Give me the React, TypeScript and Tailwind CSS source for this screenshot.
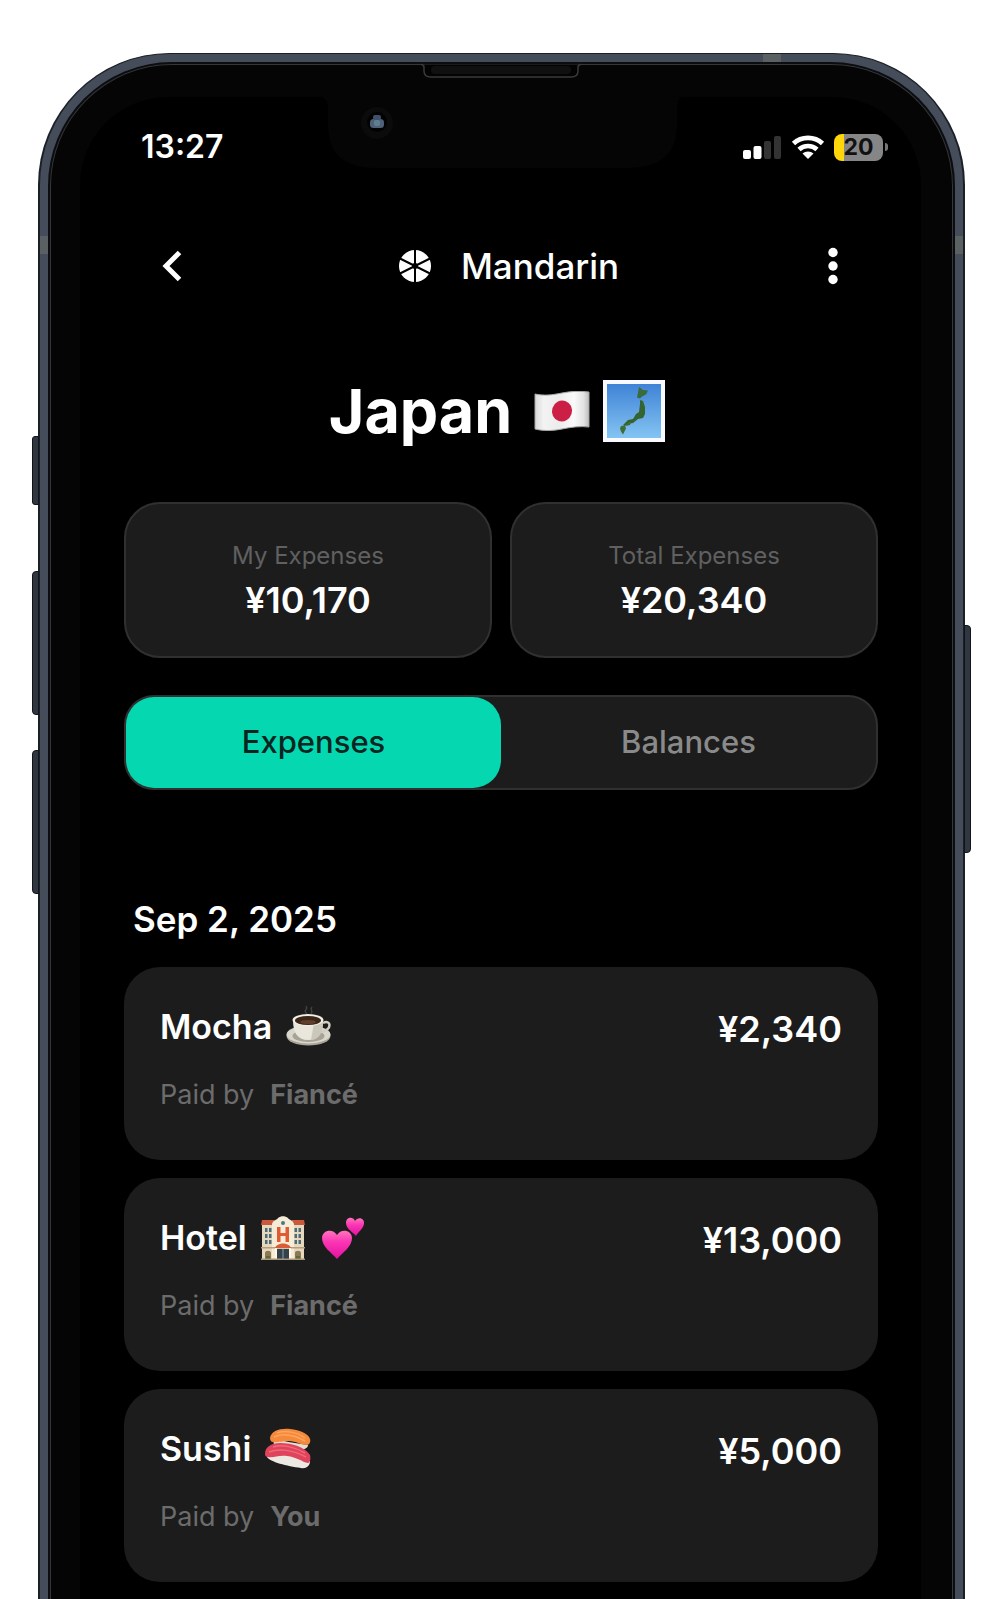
import { useState, type ReactNode } from "react";

function FlagEmoji() {
  return (
    <svg role="img" aria-label="Flag of Japan" viewBox="0 0 56 40" className="h-[40px] w-[56px]">
      <defs>
        <linearGradient id="cloth" x1="0" x2="1" y1="0" y2="0">
          <stop offset="0" stopColor="#d9d9d9" />
          <stop offset=".16" stopColor="#f3f3f3" />
          <stop offset=".45" stopColor="#ececec" />
          <stop offset=".72" stopColor="#fafafa" />
          <stop offset=".9" stopColor="#e3e3e3" />
          <stop offset="1" stopColor="#bdbdbd" />
        </linearGradient>
      </defs>
      <path d="M1 3C10 5 18 4 28 2C38 0 46 0 55 1V36C46 35 38 36 28 38C18 40 9 40 1 38Z" fill="url(#cloth)" stroke="#a6a6a6" strokeWidth="1" />
      <ellipse cx="28" cy="20" rx="10" ry="10.5" transform="rotate(18 28 20)" fill="#cb1f45" />
    </svg>
  );
}

function MapEmoji() {
  return (
    <svg role="img" aria-label="Map of Japan" viewBox="0 0 62 62" className="h-[62px] w-[62px]">
      <defs>
        <linearGradient id="sea" x1="0" x2="0" y1="0" y2="1">
          <stop offset="0" stopColor="#3f83d6" />
          <stop offset="1" stopColor="#84c4f3" />
        </linearGradient>
      </defs>
      <rect width="62" height="62" fill="#f8faff" />
      <rect x="4" y="4" width="54" height="54" fill="url(#sea)" />
      <path d="M36 7l4 3 5 .5-2 4-4 2-2 2-3-1 1-5z" fill="#3a6b38" />
      <path d="M37 20l3 1 2 6v7l-2 4-5 1-5 4-5 1-3 2-2-1 5-5 5-1 3-5 3-2 1-8z" fill="#35652f" />
      <path d="M24 43l4-1-1 3-4 1zM18 46l4-.5 1 3-2 4-1 2-2-3-1-3z" fill="#3e7034" />
    </svg>
  );
}

function CoffeeEmoji() {
  return (
    <svg role="img" aria-label="Coffee" viewBox="0 0 46 44" className="h-[44px] w-[46px]">
      <path d="M21 9c-5-4 2-4-1-8M25 9c3-4-2-4 1-7" fill="none" stroke="#77777766" strokeWidth="1.5" />
      <ellipse cx="22.500" cy="31" rx="22" ry="9.500" fill="#a9a599" />
      <ellipse cx="22.500" cy="29.500" rx="22" ry="9" fill="#d9d6cb" />
      <ellipse cx="22.500" cy="31" rx="16" ry="6" fill="#a8a397" />
      <path d="M37 18c8-4 10 6-2 9" fill="none" stroke="#d2cec3" strokeWidth="2.500" />
      <path d="M7 15c0 12 4 20 15 20s15-8 15-20z" fill="#e9e6dc" />
      <path d="M28 18h9c0 9-4 17-12 17z" fill="#cbc7bb" />
      <ellipse cx="22" cy="15" rx="15.500" ry="6" fill="#f0eee5" />
      <ellipse cx="22" cy="15.500" rx="13" ry="4.500" fill="#3c2519" />
      <ellipse cx="22" cy="17" rx="8" ry="2" fill="#603f2c" />
    </svg>
  );
}

function HotelEmoji() {
  return (
    <svg role="img" aria-label="Hotel" viewBox="0 0 44 44" className="h-[44px] w-[44px]">
      <path d="M1 7h12v36H1zM31 7h12v36H31z" fill="#e6d8bd" />
      <path d="M1 4h12l1 5H0zM31 4h12l1 5H30z" fill="#c9593a" />
      <path d="M11 43V8C12 4 16 4 17 2c3-2.500 7-2.500 10 0 1 2 5 2 6 6v35z" fill="#f6ecd6" />
      <circle cx="22" cy="7" r="2" fill="#3e7c8c" />
      <path d="M16 11h3.500v6h5v-6H28v15h-3.500v-6h-5v6H16z" fill="#df5b34" />
      <path
        d="M4 12h2.500v4H4zM8 12h2.500v4H8zM4 18h2.500v4H4zM8 18h2.500v4H8zM4 24h2.500v4H4zM8 24h2.500v4H8zM33.500 12H36v4h-2.500zM37.500 12H40v4h-2.500zM33.500 18H36v4h-2.500zM37.500 18H40v4h-2.500zM33.500 24H36v4h-2.500zM37.500 24H40v4h-2.500z"
        fill="#4c6a78"
      />
      <path d="M0 31h44v1.500H0z" fill="#b79d7b" />
      <path d="M16 33h12v10H16z" fill="#33424b" />
      <path d="M21.500 33h1v10h-1z" fill="#8ba0a9" />
      <path d="M14 32c2-6 14-6 16 0z" fill="#d95b38" />
      <path d="M14 32h2v11h-2zM28 32h2v11h-2z" fill="#fff6e3" />
      <path d="M4 43v-6c0-3 6-3 6 0v6zM34 43v-6c0-3 6-3 6 0v6z" fill="#8c7758" />
      <path d="M5 40h4v3H5zM35 40h4v3h-4z" fill="#57702f" />
      <path d="M0 42.500h44V44H0z" fill="#a9967a" />
    </svg>
  );
}

function HeartsEmoji() {
  return (
    <svg role="img" aria-label="Two hearts" viewBox="0 0 44 44" className="h-[44px] w-[44px]">
      <defs>
        <linearGradient id="pink" x1="0" x2="0" y1="0" y2="1">
          <stop offset="0" stopColor="#ff74bd" />
          <stop offset=".4" stopColor="#fb35b4" />
          <stop offset="1" stopColor="#e312a0" />
        </linearGradient>
      </defs>
      <path d="M16 43C11 37 1 31 1 22c0-8 11-10 15-3 4-7 15-5 15 3 0 9-10 15-15 21z" fill="url(#pink)" />
      <path d="M35 20c-3-4-10-7-10-13 0-6 7-7 9-2 3-5 10-3 9 3-1 5-6 8-8 12z" fill="url(#pink)" />
    </svg>
  );
}

function SushiEmoji() {
  return (
    <svg role="img" aria-label="Sushi" viewBox="0 0 46 42" className="h-[42px] w-[46px]">
      <path d="M8 10c8 3 22 5 35 7 0 3-4 5-7 4L9 17z" fill="#e4ddd2" />
      <path d="M5 10C6 3 15 0 25 1s19 5 20 10c1 3-1 6-3 6-6 0-11-4-18-4-8 0-12 2-16 1-2 0-3-2-3-4z" fill="#f58a3c" />
      <path d="M12 5c8-3 20-1 28 5M9 9c9-4 20-2 31 4" fill="none" stroke="#ffa55c" strokeWidth="1.500" />
      <path d="M2 25c10-4 32-1 43 8 0 5-4 8-9 7C22 38 5 34 2 29z" fill="#ece9e2" />
      <path d="M0 26c0-7 6-11 15-11 12 0 25 4 30 12 1 4 0 8-2 8-6-1-11-6-21-7-9-1-13 2-19 1-2 0-3-1-3-3z" fill="#e0435c" />
      <path d="M8 19c9-3 22 0 32 6M4 24c10-4 24-2 37 5" fill="none" stroke="#ee6a7b" strokeWidth="1.500" />
    </svg>
  );
}

function MandarinLogo() {
  return (
    <svg viewBox="0 0 32 32" className="h-8 w-8" aria-hidden="true">
      <circle cx="16" cy="16" r="16" fill="#fff" />
      <path d="M16 0v32M1 8.500l30 15M31 8.500L1 23.500" stroke="#000" strokeWidth="2" />
      <circle cx="16" cy="16" r="3" fill="#000" />
    </svg>
  );
}

function StatusIcons() {
  return (
    <div className="flex items-center gap-[9px]">
      <svg viewBox="0 0 39 24" className="h-6 w-[39px]" role="img" aria-label="Signal: two of four bars">
        <rect x="0" y="15" width="8" height="9" rx="2" fill="#fff" />
        <rect x="10.500" y="11" width="8" height="13" rx="2" fill="#fff" />
        <rect x="21" y="6" width="7" height="18" rx="2" fill="#333" />
        <rect x="31" y="1" width="7" height="23" rx="2" fill="#333" />
      </svg>
      <svg viewBox="0 0 34 24" className="h-6 w-[34px]" role="img" aria-label="Wi-Fi">
        <path d="M2.500 8.500C10.500 1 23.500 1 31.500 8.500" fill="none" stroke="#fff" strokeWidth="4.800" />
        <path d="M8 14.500C13 9.800 21 9.800 26 14.500" fill="none" stroke="#fff" strokeWidth="4.600" />
        <path d="M17 24l-5.500-5.500C14.500 15.800 19.500 15.800 22.500 18.500z" fill="#fff" />
      </svg>
      <div className="flex items-center gap-[2px]">
        <div className="flex h-[27px] w-[49px] items-center justify-center rounded-lg bg-linear-to-r from-[#ffd60a] from-20% to-[#868686] to-20%">
          <span className="text-[23px] leading-none font-bold text-[#111]">20</span>
        </div>
        <div className="h-2 w-[3px] rounded-r-full bg-[#777]" />
      </div>
    </div>
  );
}

function SummaryCard({ label, value }: { label: string; value: string }) {
  return (
    <div className="flex flex-col items-center gap-[6px] rounded-[36px] border-2 border-[#303030] bg-[#1c1c1c] pt-9 pb-[34px]">
      <dt className="text-[24px] leading-8 text-[#606060]">{label}</dt>
      <dd className="text-[36px] leading-[44px] font-semibold text-white">{value}</dd>
    </div>
  );
}

type Expense = { name: string; icons: ReactNode; amount: string; payer: string };

const expenses: Expense[] = [
  { name: "Mocha", icons: <CoffeeEmoji />, amount: "¥2,340", payer: "Fiancé" },
  { name: "Hotel", icons: <><HotelEmoji /><HeartsEmoji /></>, amount: "¥13,000", payer: "Fiancé" },
  { name: "Sushi", icons: <SushiEmoji />, amount: "¥5,000", payer: "You" },
];

function ExpenseCard({ name, icons, amount, payer }: Expense) {
  return (
    <li className="flex items-start justify-between rounded-[36px] bg-[#1c1c1c] px-9 pt-[38px] pb-[47px]">
      <div className="flex flex-col gap-7">
        <div className="flex items-center gap-[14px]">
          <h3 className="text-[34px] leading-[44px] font-semibold text-white">{name}</h3>
          <span className="flex gap-4">{icons}</span>
        </div>
        <p className="flex gap-4 text-[27px] leading-9 text-[#6c6c6c]">
          <span>Paid by</span>
          <span className="font-bold">{payer}</span>
        </p>
      </div>
      <p className="pt-[2px] text-[36px] leading-[44px] font-semibold text-white">{amount}</p>
    </li>
  );
}

function Notch() {
  return (
    <svg viewBox="0 0 370 106" className="absolute top-[-35px] left-1/2 h-[106px] w-[370px] -translate-x-1/2" aria-hidden="true">
      <path d="M0 34.500C8 34.500 12 38 12 46V62C12 92 27 106 62 106H310C345 106 361 92 361 62V46C361 38 364 34.500 370 34.500Z" fill="#050505" />
      <path d="M105 2.500q3 0 3 3V9q0 6 7 6H255q7 0 7-6V5.500q0-3 3-3" fill="#030303" stroke="#3a3a3a" strokeWidth="1.500" />
      <rect x="115" y="4" width="140" height="8" rx="4" fill="#101010" />
      <circle cx="61" cy="61" r="16" fill="#0b0b0c" />
      <circle cx="61" cy="60" r="10" fill="#020203" />
      <rect x="54" y="57" width="14" height="9" rx="3.500" fill="#4d6179" />
      <rect x="57" y="53" width="8" height="5" rx="2" fill="#3f5068" />
      <rect x="58" y="58" width="6" height="6" rx="2" fill="#5f7d91" />
    </svg>
  );
}

const sideKey = "absolute border border-[#11151a] bg-[#303740]";

export default function App() {
  const [tab, setTab] = useState<"Expenses" | "Balances">("Expenses");

  return (
    <div className="flex min-h-screen flex-col overflow-hidden bg-white pt-[53px] pr-[35px] pl-[38px] font-['Inter',sans-serif]">
      <div className="relative flex grow flex-col rounded-t-[132px] border-x-2 border-t border-[#1b2027] bg-[#454d5a] px-2 pt-2">
        <div className={`${sideKey} top-[382px] left-[-8px] h-[69px] w-[7px] rounded-l-[3px]`} />
        <div className={`${sideKey} top-[517px] left-[-8px] h-[144px] w-[7px] rounded-l-[4px]`} />
        <div className={`${sideKey} top-[696px] left-[-8px] h-[144px] w-[7px] rounded-l-[4px]`} />
        <div className={`${sideKey} top-[571px] right-[-8px] h-[228px] w-[7px] rounded-r-[4px]`} />
        <div className="absolute top-0 right-[182px] h-[9px] w-[18px] bg-[#5b6063]" />
        <div className="absolute top-[182px] left-0 h-[18px] w-2 bg-[#5b6063]" />
        <div className="absolute top-[182px] right-0 h-[18px] w-2 bg-[#5b6063]" />

        <div className="relative flex grow flex-col rounded-t-[124px] border-x-2 border-t-2 border-[#0b0d10] bg-[#050505]">
          <div className="flex grow flex-col rounded-t-[122px] border-x border-t border-[#35353a] pt-8 pr-[31px] pl-[29px]">
            <main className="relative flex grow flex-col rounded-t-[88px] bg-black pr-[43px] pb-4 pl-[44px]">
              <Notch />

              <div className="flex h-[100px] items-center justify-between pl-[17px]">
                <time className="text-[32px] leading-10 font-semibold text-white">13:27</time>
                <div className="-mr-[10px]">
                  <StatusIcons />
                </div>
              </div>

              <header className="flex h-[138px] items-center justify-between px-9">
                <button type="button" aria-label="Back" className="flex h-11 w-6 items-center justify-center">
                  <svg viewBox="0 0 20 32" className="h-8 w-5" aria-hidden="true">
                    <path d="M17.500 2.500L4 16l13.500 13.500" fill="none" stroke="#fff" strokeWidth="5" />
                  </svg>
                </button>
                <div className="flex items-center gap-[30px] pl-[10px]">
                  <MandarinLogo />
                  <span className="text-[35px] leading-[44px] font-medium text-white">Mandarin</span>
                </div>
                <button type="button" aria-label="More options" className="flex h-11 w-[18px] items-center justify-center">
                  <svg viewBox="0 0 10 38" className="h-[38px] w-[10px]" aria-hidden="true">
                    <circle cx="5" cy="5.500" r="4.700" fill="#fff" />
                    <circle cx="5" cy="19" r="4.700" fill="#fff" />
                    <circle cx="5" cy="32.500" r="4.700" fill="#fff" />
                  </svg>
                </button>
              </header>

              <div className="flex h-[152px] items-center justify-center pr-2">
                <h1 className="text-[61px] leading-[76px] font-bold text-white">Japan</h1>
                <span className="ml-[22px] flex items-center gap-[13px]">
                  <FlagEmoji />
                  <MapEmoji />
                </span>
              </div>

              <dl className="mt-[15px] grid grid-cols-2 gap-[18px]">
                <SummaryCard label="My Expenses" value="¥10,170" />
                <SummaryCard label="Total Expenses" value="¥20,340" />
              </dl>

              <div role="tablist" className="mt-[37px] grid h-[95px] grid-cols-2 rounded-[30px] border-2 border-[#303030] bg-[#1c1c1c]">
                {(["Expenses", "Balances"] as const).map((name) => (
                  <button
                    key={name}
                    type="button"
                    role="tab"
                    aria-selected={tab === name}
                    onClick={() => setTab(name)}
                    className={`rounded-[28px] text-[31px] font-medium ${tab === name ? "bg-[#05d8b0] text-[#08251f]" : "text-[#8a8a8a]"}`}
                  >
                    {name}
                  </button>
                ))}
              </div>

              <section className="mt-[107px]">
                <h2 className="pl-[9px] text-[35px] leading-[44px] font-semibold text-white">Sep 2, 2025</h2>
                <ul className="mt-[26px] flex flex-col gap-[18px]">
                  {expenses.map((expense) => (
                    <ExpenseCard key={expense.name} {...expense} />
                  ))}
                </ul>
              </section>
            </main>
          </div>
        </div>
      </div>
    </div>
  );
}
